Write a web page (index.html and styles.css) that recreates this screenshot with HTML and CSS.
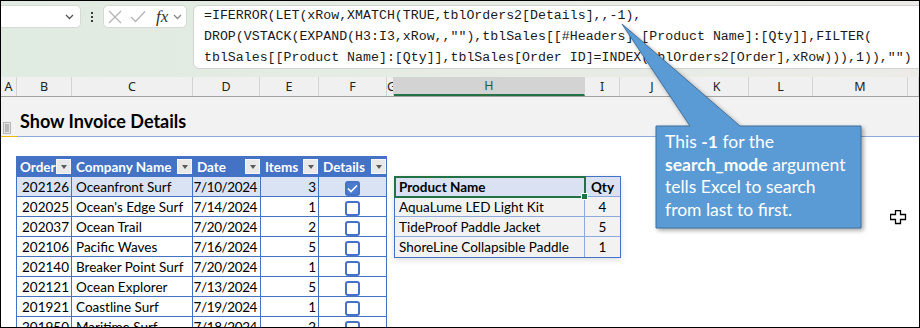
FILE: index.html
```html
<!DOCTYPE html>
<html lang="en">
<head>
  <meta charset="UTF-8" />
  <title>Show Invoice Details</title>
  <link rel="stylesheet" href="styles.css">
</head>
<body>
  <div class="frame">

    <div class="ribbon">
      <div class="namebox">
        <svg class="chev" width="9" height="6" viewBox="0 0 9 6"><path d="M1 1 L4.5 4.5 L8 1" /></svg>
      </div>
      <div class="dots"><span></span><span></span><span></span></div>
      <div class="fxbox">
        <svg class="ico-x" width="14" height="14" viewBox="0 0 14 14"><path d="M1 1 L13 13 M13 1 L1 13" /></svg>
        <svg class="ico-ok" width="16" height="13" viewBox="0 0 16 13"><path d="M1 7 L5.5 11.5 L15 1.5" /></svg>
        <span class="fx">fx</span>
        <svg class="chev" width="9" height="6" viewBox="0 0 9 6"><path d="M1 1 L4.5 4.5 L8 1" /></svg>
      </div>
      <div class="formula">
        <div class="fline">=IFERROR(LET(xRow,XMATCH(TRUE,tblOrders2[Details],,-1),</div>
        <div class="fline">DROP(VSTACK(EXPAND(H3:I3,xRow,,""),tblSales[[#Headers],[Product Name]:[Qty]],FILTER(</div>
        <div class="fline">tblSales[[Product Name]:[Qty]],tblSales[Order ID]=INDEX(tblOrders2[Order],xRow))),1)),"")</div>
      </div>
    </div>

    <div class="colheads">
      <div class="ch">A</div>
      <div class="ch">B</div>
      <div class="ch">C</div>
      <div class="ch">D</div>
      <div class="ch">E</div>
      <div class="ch">F</div>
      <div class="ch ch-g">G</div>
      <div class="ch ch-sel">H</div>
      <div class="ch">I</div>
      <div class="ch">J</div>
      <div class="ch">K</div>
      <div class="ch">L</div>
      <div class="ch">M</div>
      <div class="ch"></div>
    </div>

    <div class="titlerow">
      <div class="title-a">
        <svg width="8" height="12" viewBox="0 0 8 12">
          <rect x="0.5" y="0.5" width="7" height="11" fill="#e6e6e6" stroke="#b5b5b5" />
          <path d="M2 3 H6 M2 5 H6 M2 7 H6 M2 9 H6" stroke="#8a8a8a" stroke-width="1" />
        </svg>
      </div>
      <div class="title-b">Show Invoice Details</div>
    </div>

    <div class="sheet">
      <table class="orders">
        <thead>
          <tr>
            <th class="c-order"><div class="hd">Order<span class="dd"></span></div></th>
            <th class="c-company"><div class="hd">Company Name<span class="dd"></span></div></th>
            <th class="c-date"><div class="hd">Date<span class="dd"></span></div></th>
            <th class="c-items"><div class="hd">Items<span class="dd"></span></div></th>
            <th class="c-details"><div class="hd">Details<span class="dd"></span></div></th>
          </tr>
        </thead>
        <tbody>
          <tr class="sel">
            <td class="num">202126</td><td>Oceanfront Surf</td><td class="num date">7/10/2024</td><td class="num">3</td>
            <td class="cb"><span class="box checked"><svg width="11" height="9" viewBox="0 0 11 9"><path d="M1 4.5 L4 7.5 L10 1.5" /></svg></span></td>
          </tr>
          <tr>
            <td class="num">202025</td><td>Ocean's Edge Surf</td><td class="num date">7/14/2024</td><td class="num">1</td>
            <td class="cb"><span class="box"></span></td>
          </tr>
          <tr>
            <td class="num">202037</td><td>Ocean Trail</td><td class="num date">7/20/2024</td><td class="num">2</td>
            <td class="cb"><span class="box"></span></td>
          </tr>
          <tr>
            <td class="num">202106</td><td>Pacific Waves</td><td class="num date">7/16/2024</td><td class="num">5</td>
            <td class="cb"><span class="box"></span></td>
          </tr>
          <tr>
            <td class="num">202140</td><td>Breaker Point Surf</td><td class="num date">7/20/2024</td><td class="num">1</td>
            <td class="cb"><span class="box"></span></td>
          </tr>
          <tr>
            <td class="num">202121</td><td>Ocean Explorer</td><td class="num date">7/13/2024</td><td class="num">5</td>
            <td class="cb"><span class="box"></span></td>
          </tr>
          <tr>
            <td class="num">201921</td><td>Coastline Surf</td><td class="num date">7/19/2024</td><td class="num">1</td>
            <td class="cb"><span class="box"></span></td>
          </tr>
          <tr>
            <td class="num">201950</td><td>Maritime Surf</td><td class="num date">7/18/2024</td><td class="num">2</td>
            <td class="cb"><span class="box"></span></td>
          </tr>
        </tbody>
      </table>

      <table class="products">
        <thead>
          <tr>
            <th class="c-pname active">Product Name</th>
            <th class="c-qty">Qty</th>
          </tr>
        </thead>
        <tbody>
          <tr><td>AquaLume LED Light Kit</td><td class="qty">4</td></tr>
          <tr><td>TideProof Paddle Jacket</td><td class="qty">5</td></tr>
          <tr><td>ShoreLine Collapsible Paddle</td><td class="qty">1</td></tr>
        </tbody>
      </table>
    </div>

    <!-- callout over the formula bar and grid -->
    <svg class="callout-shape" width="918" height="326" viewBox="0 0 918 326">
      <path d="M621 23 L739 125 H860 V227 H655 V125 H689 Z" />
    </svg>
    <div class="callout-text">
      This <b>-1</b> for the<br>
      <b>search_mode</b> argument<br>
      tells Excel to search<br>
      from last to first.
    </div>

    <svg class="cursor" width="17" height="15" viewBox="0 0 17 15">
      <path d="M5.5 0.5 H10.5 V4.5 H15.5 V9.5 H10.5 V13.5 H5.5 V9.5 H0.5 V4.5 H5.5 Z" />
    </svg>
  </div>
</body>
</html>
```

FILE: styles.css
```css
body {
  margin: 0;
  background: #fff;
}

.frame {
  position: relative;
  width: 918px;
  height: 326px;
  border: 1px solid #000;
  overflow: hidden;
  background: #fff;
  font-family: Lato, sans-serif;
  color: #000;
}

/* formula bar */
.ribbon {
  height: 76px;
  box-sizing: border-box;
  padding-top: 4px;
  display: flex;
  align-items: flex-start;
  background: linear-gradient(90deg, #e0ebe1 0%, #e6ece4 50%, #ecebe7 100%);
}

.namebox, .fxbox {
  height: 23px;
  box-sizing: border-box;
  background: #fff;
  border: 1px solid #d5dad5;
  border-radius: 5px;
  display: flex;
  align-items: center;
}

.namebox {
  margin-left: -8px;
  width: 88px;
  justify-content: flex-end;
  padding-right: 6px;
}

.chev path {
  fill: none;
  stroke: #555;
  stroke-width: 1.3;
}

.dots {
  width: 22px;
  height: 23px;
  display: flex;
  flex-direction: column;
  align-items: center;
  justify-content: center;
  gap: 2px;
}

.dots span {
  width: 2px;
  height: 2px;
  background: #3a3a3a;
}

.fxbox {
  width: 84px;
  padding-left: 4px;
}

.ico-x path, .ico-ok path {
  fill: none;
  stroke: #b4b4b4;
  stroke-width: 1.3;
}

.ico-ok {
  margin-left: 8px;
}

.fx {
  margin-left: 10px;
  font-family: "Liberation Serif", serif;
  font-style: italic;
  font-size: 17px;
  color: #333;
  line-height: 20px;
}

.fxbox .chev {
  margin-left: 5px;
}

.fxbox .chev path {
  stroke: #888;
}

.formula {
  margin-left: 6px;
  margin-right: -12px;
  flex: 1;
  height: 64px;
  box-sizing: border-box;
  background: #fff;
  border: 1px solid #d2d2d2;
  border-radius: 6px;
  padding: 0 0 0 10px;
  font-family: "Liberation Mono", monospace;
  font-size: 13.25px;
  line-height: 20.8px;
  color: #1a1a1a;
  overflow: hidden;
}

.fline {
  white-space: pre;
}

/* column letters */
.colheads {
  display: grid;
  grid-template-columns: 16px 55px 121px 67px 59px 68px 7px 191px 35px 65px 64px 64px 95px 1fr;
  height: 20px;
  box-sizing: border-box;
  background: #f0f0f0;
  border-bottom: 1px solid #a2a2a2;
}

.ch {
  border-right: 1px solid #d3d3d3;
  font-family: "Noto Sans", sans-serif;
  font-size: 12.5px;
  line-height: 19px;
  text-align: center;
  color: #222;
  overflow: hidden;
}

.ch-g {
  text-align: left;
}

.ch-sel {
  background: #d3d3d3;
  color: #1d5e3a;
  border-bottom: 2px solid #217346;
  line-height: 18px;
}

/* title row */
.titlerow {
  display: flex;
  height: 40px;
  background: #f2f2f2;
}

.title-a {
  width: 16px;
  box-sizing: border-box;
  border-bottom: 1px solid #f2b800;
  padding: 21px 0 0 2px;
}

.title-b {
  flex: 1;
  box-sizing: border-box;
  border-bottom: 1px solid #8eaadb;
  padding: 13px 0 0 3px;
  font-size: 18px;
  font-weight: 700;
  line-height: 22px;
}

/* sheet area */
.sheet {
  display: flex;
  align-items: flex-start;
  padding-left: 15px;
}

table {
  border-spacing: 0;
  table-layout: fixed;
  font-size: 13.5px;
}

th, td {
  box-sizing: border-box;
  padding: 0;
  white-space: nowrap;
  overflow: hidden;
}

.orders {
  margin-top: 19px;
  width: 371px;
}

.orders .c-order { width: 56px; }
.orders .c-company { width: 121px; }
.orders .c-date { width: 68px; }
.orders .c-items { width: 58px; }
.orders .c-details { width: 68px; }

.orders thead tr {
  height: 21px;
}

.orders th {
  background: #4472c4;
  color: #fff;
  font-weight: 700;
  text-align: left;
}

.hd {
  display: flex;
  align-items: center;
  justify-content: space-between;
  padding: 0 1px 0 4px;
}

.dd {
  width: 15px;
  height: 15px;
  box-sizing: border-box;
  background: #e9e9e9;
  border: 1px solid #f6f6f6;
  display: flex;
  align-items: center;
  justify-content: center;
}

.dd::after {
  content: "";
  border-left: 3.5px solid transparent;
  border-right: 3.5px solid transparent;
  border-top: 4px solid #5a5a5a;
}

.orders tbody tr {
  height: 20px;
}

.orders td {
  border-right: 1px solid #4472c4;
  border-bottom: 1px solid #4472c4;
  padding: 0 4px;
  line-height: 18px;
}

.orders td:first-child {
  border-left: 1px solid #4472c4;
}

.orders .num {
  text-align: right;
  padding-left: 0;
  padding-right: 2px;
}

.orders .date {
  letter-spacing: -0.4px;
  padding-right: 3px;
}

.orders .sel td {
  background: #dae3f3;
}

.cb {
  text-align: center;
}

.box {
  display: inline-flex;
  align-items: center;
  justify-content: center;
  width: 15px;
  height: 15px;
  box-sizing: border-box;
  border: 2px solid #4472c4;
  border-radius: 3px;
  background: #fff;
  vertical-align: middle;
}

.box.checked {
  background: #4a7bd0;
}

.box svg path {
  fill: none;
  stroke: #fff;
  stroke-width: 1.6;
}

.products {
  margin-top: 39px;
  margin-left: 7px;
  width: 227px;
  border: 1px solid #4472c4;
  box-shadow: 0 2px 6px rgba(0, 0, 0, 0.14);
}

.products .c-pname { width: 190px; }
.products .c-qty { width: 35px; }

.products thead tr {
  height: 20px;
}

.products th {
  background: #d9e1f2;
  font-weight: 700;
  text-align: left;
  padding-left: 4px;
  border-bottom: 1px solid #8eaadb;
  border-right: 1px solid #8eaadb;
}

.products th.c-qty {
  text-align: center;
  padding-left: 0;
  border-right: none;
}

.products th.active {
  position: relative;
  overflow: visible;
  outline: 2px solid #217346;
  outline-offset: -1px;
}

.products th.active::after {
  content: "";
  position: absolute;
  right: -4px;
  bottom: -4px;
  width: 5px;
  height: 5px;
  background: #217346;
  border: 1px solid #fff;
}

.products tbody tr {
  height: 20px;
}

.products td {
  background: #f2f2f2;
  padding-left: 4px;
  border-bottom: 1px solid #8eaadb;
  border-right: 1px solid #8eaadb;
  line-height: 18px;
}

.products tr:last-child td {
  border-bottom: none;
}

.products td.qty {
  text-align: center;
  padding-left: 0;
  border-right: none;
}

/* callout */
.callout-shape {
  position: absolute;
  left: 0;
  top: 0;
  pointer-events: none;
  filter: drop-shadow(2px 2px 2px rgba(0, 0, 0, 0.35));
}

.callout-shape path {
  fill: #5b9bd5;
  stroke: #41719c;
  stroke-width: 1;
}

.callout-text {
  position: absolute;
  left: 664px;
  top: 130px;
  font-size: 17.5px;
  line-height: 22.7px;
  color: #fff;
}

.cursor {
  position: absolute;
  left: 889px;
  top: 209px;
}

.cursor path {
  fill: #fff;
  stroke: #000;
  stroke-width: 1.3;
}
```
